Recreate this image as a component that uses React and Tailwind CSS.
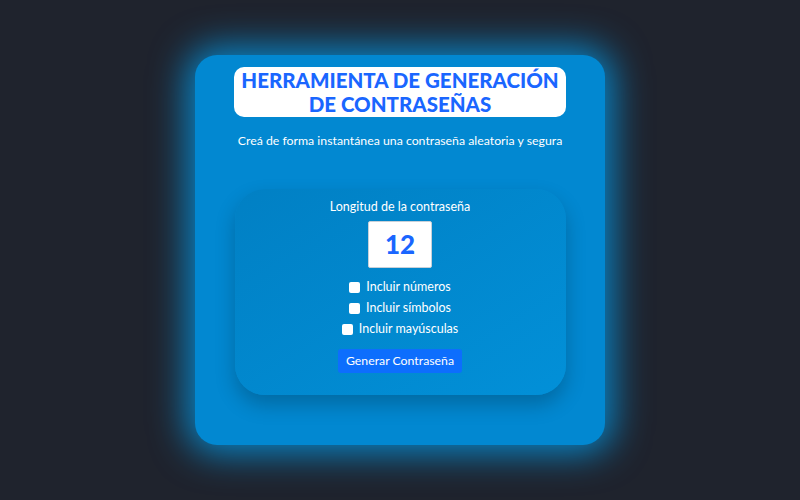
export default function App() {
  return (
    <div className="w-[800px] h-[500px] bg-[#1f232d] flex items-center justify-center font-['Lato',sans-serif]">
      {/* ── Card ── */}
      <div className="w-[410px] h-[390px] bg-[#0288d1] rounded-[22px] shadow-[0_0_36px_8px_rgba(0,170,255,0.75)] flex flex-col items-center pt-3">
        <div className="w-[332px] h-[50px] bg-white rounded-[10px] flex items-center justify-center">
          <h1 className="text-[#1a66ff] text-[20.5px] leading-[24px] font-black text-center whitespace-nowrap">
            HERRAMIENTA DE GENERACIÓN
            <br />
            DE CONTRASEÑAS
          </h1>
        </div>
        <p className="text-white text-[12.3px] mt-[15px] whitespace-nowrap">
          Creá de forma instantánea una contraseña aleatoria y segura
        </p>

        {/* ── Form ── */}
        <div className="mt-[39px] w-[331px] h-[206px] rounded-[30px] bg-gradient-to-br from-[#0180c4] to-[#0290d8] shadow-[0_10px_20px_rgba(0,0,0,0.22)] flex flex-col items-center pt-[9px]">
          <label className="text-white text-[12.5px]">Longitud de la contraseña</label>
          <div className="mt-[4px] w-[64px] h-[47px] bg-white border border-[#c8d0d8] rounded-[2px] flex items-center justify-center">
            <span className="text-[#1a66ff] text-[26px] font-black">12</span>
          </div>
          <div className="mt-[11px] flex flex-col items-center gap-[5px]">
            {["Incluir números", "Incluir símbolos", "Incluir mayúsculas"].map((t) => (
              <label key={t} className="flex items-center gap-[6px] text-white text-[12.5px] leading-[16px]">
                <span className="w-[11px] h-[11px] bg-white rounded-[2px]" />
                {t}
              </label>
            ))}
          </div>
          <button className="mt-[12px] h-[24px] px-[8px] bg-[#0d6efd] text-white text-[12.3px] rounded-[3px]">
            Generar Contraseña
          </button>
        </div>
      </div>
    </div>
  );
}
